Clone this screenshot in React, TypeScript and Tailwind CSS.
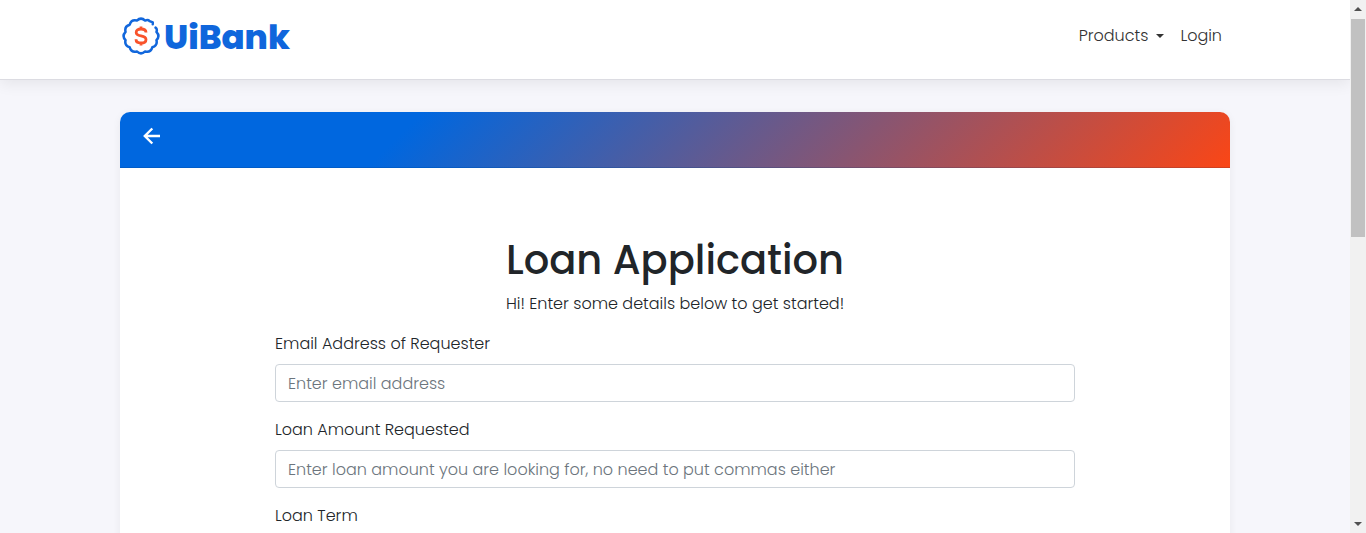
import React from "react";

const CENTER = 19;
const VALLEY_RADIUS = 16;

function pointAt(degrees: number, radius: number) {
  const angle = (degrees * Math.PI) / 180;
  const x = CENTER + radius * Math.sin(angle);
  const y = CENTER - radius * Math.cos(angle);
  return `${x.toFixed(2)} ${y.toFixed(2)}`;
}

// Twelve outward bumps running clockwise, with an opening at the upper right.
function scallopedRing() {
  let d = `M${pointAt(60, 16.8)} Q${pointAt(67, 18)} ${pointAt(75, VALLEY_RADIUS)}`;
  for (let valley = 105; valley <= 375; valley += 30) {
    d += ` Q${pointAt(valley - 15, 19.4)} ${pointAt(valley, VALLEY_RADIUS)}`;
  }
  return `${d} Q${pointAt(383, 18)} ${pointAt(390, 17.2)} L${pointAt(401, 18)} L${pointAt(405, 16.6)}`;
}

function LogoMark() {
  return (
    <svg width="38" height="38" viewBox="0 0 38 38" fill="none" aria-hidden="true">
      <path d={scallopedRing()} stroke="#1267dc" strokeWidth="2.5" strokeLinejoin="round" strokeLinecap="round" />
      <path
        d="M24 15.4 C24 13.1 22 12 19 12 C16 12 14.2 13.4 14.2 15.4 C14.2 17.8 16.3 18.3 19 18.8 C21.8 19.3 24 20 24 22.4 C24 24.8 21.9 26 19 26 C15.9 26 14 24.6 14 22.2 M19 9.4 V12.6 M19 25.4 V28.6"
        stroke="#f9532b"
        strokeWidth="2.8"
      />
    </svg>
  );
}

function Navbar() {
  return (
    <header className="relative border-b border-[#dcdce2] bg-white shadow-[0_4px_14px_rgba(0,0,0,0.07)]">
      <nav className="mx-auto flex h-[79px] max-w-[1110px] items-start justify-between text-[#333]">
        <a href="#home" aria-label="UiBank" className="flex items-center gap-1 pt-4 pl-[2px]">
          <LogoMark />
          <span className="pt-[2px] text-[34px] leading-[38px] font-extrabold text-[#0f66dc]">UiBank</span>
        </a>
        <div className="flex items-center gap-4 pt-6 pr-2">
          <button type="button" className="flex items-center gap-2">
            Products
            <span className="border-x-4 border-t-4 border-x-transparent border-t-[#333]" />
          </button>
          <a href="#login">Login</a>
        </div>
      </nav>
    </header>
  );
}

const controlClass =
  "block h-[38px] w-full rounded-[4px] border border-[#ced4da] bg-white px-3 text-[#495057] placeholder:text-[#6c757d]";

function Field({ id, label, children }: { id: string; label: string; children: React.ReactNode }) {
  return (
    <div className="mb-4">
      <label htmlFor={id} className="mb-2 block">
        {label}
      </label>
      {children}
    </div>
  );
}

function ScrollRail() {
  return (
    <div aria-hidden="true" className="flex w-4 shrink-0 flex-col items-center bg-[#f1f1f1] py-[7px]">
      <span className="border-x-4 border-b-4 border-x-transparent border-b-[#505050]" />
      <span className="mt-2 h-[42%] w-[14px] bg-[#c1c1c1]" />
      <span className="mt-auto border-x-4 border-t-4 border-x-transparent border-t-[#505050]" />
    </div>
  );
}

export default function App() {
  return (
    <div className="flex h-screen bg-[#f6f6fb] font-['Poppins','Inter',sans-serif] text-base leading-6 font-light text-[#212529]">
      <div className="min-w-0 flex-1 overflow-hidden">
        <Navbar />
        <main className="mx-auto mt-8 max-w-[1110px] rounded-[10px] bg-white shadow-[0_2px_8px_rgba(0,0,0,0.06)]">
          <div className="h-14 rounded-t-[10px] border-b border-black/10 bg-[linear-gradient(135deg,#0067df_26%,#fa4616_100%)] px-[22px] pt-3">
            <button type="button" aria-label="Back" className="block">
              <svg width="20" height="24" viewBox="0 0 20 24" fill="none" stroke="#fff" strokeWidth="2.4" aria-hidden="true">
                <path d="M18 12H3M10.3 4.5L2.8 12L10.3 19.5" />
              </svg>
            </button>
          </div>
          <form className="mx-auto max-w-[800px] pt-[68px] pb-16">
            <h1 className="mb-2 text-center text-[40px] leading-[48px] font-medium">Loan Application</h1>
            <p className="mb-4 text-center">Hi! Enter some details below to get started!</p>
            <Field id="email" label="Email Address of Requester">
              <input id="email" type="email" placeholder="Enter email address" className={controlClass} />
            </Field>
            <Field id="amount" label="Loan Amount Requested">
              <input
                id="amount"
                type="text"
                placeholder="Enter loan amount you are looking for, no need to put commas either"
                className={controlClass}
              />
            </Field>
            <Field id="term" label="Loan Term">
              <select id="term" className={controlClass} />
            </Field>
          </form>
        </main>
      </div>
      <ScrollRail />
    </div>
  );
}
